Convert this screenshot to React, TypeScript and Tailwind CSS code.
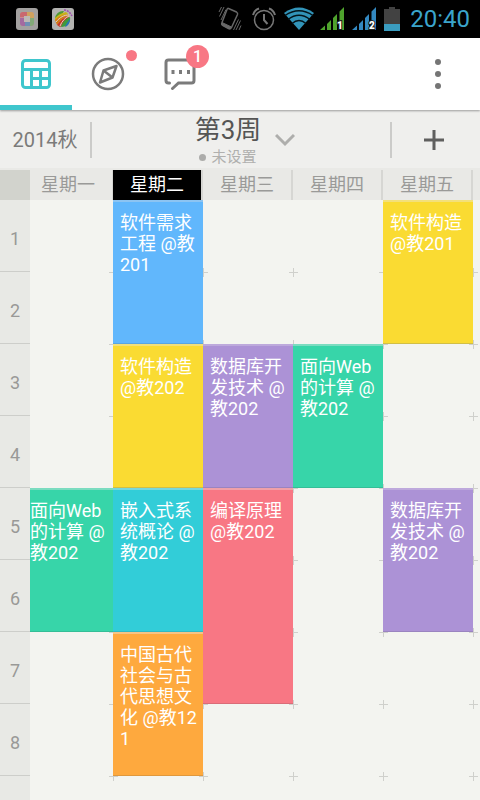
import React from "react";

type Course = {
  name: string;
  day: number;
  start: number;
  span: number;
  tone: string;
};

const DAYS = ["星期一", "星期二", "星期三", "星期四", "星期五"];
const TODAY = 1;

const DAY_COL = ["col-start-2", "col-start-3", "col-start-4", "col-start-5", "col-start-6"];
const ROW_START = [
  "row-start-1",
  "row-start-2",
  "row-start-3",
  "row-start-4",
  "row-start-5",
  "row-start-6",
  "row-start-7",
  "row-start-8",
  "row-start-9",
];
const ROW_SPAN: Record<number, string> = { 2: "row-span-2", 3: "row-span-3" };

const BLUE = "bg-[#61b7fc] border-t-[#8cc4f2] border-b-[#5aa5e0]";
const YELLOW = "bg-[#fadb32] border-t-[#f3e07a] border-b-[#d2bf45]";
const PURPLE = "bg-[#ac92d6] border-t-[#bda9dc] border-b-[#9a84c0]";
const GREEN = "bg-[#37d5a9] border-t-[#7bdcc0] border-b-[#34be97]";
const CYAN = "bg-[#32cdd8] border-t-[#77d7dc] border-b-[#31b8c1]";
const RED = "bg-[#f87784] border-t-[#f0a0a8] border-b-[#da6c78]";
const ORANGE = "bg-[#fea93e] border-t-[#f6c384] border-b-[#df983d]";

const COURSES: Course[] = [
  { name: "面向Web的计算 @教202", day: 0, start: 5, span: 2, tone: GREEN },
  { name: "软件需求工程 @教201", day: 1, start: 1, span: 2, tone: BLUE },
  { name: "软件构造 @教202", day: 1, start: 3, span: 2, tone: YELLOW },
  { name: "嵌入式系统概论 @教202", day: 1, start: 5, span: 2, tone: CYAN },
  { name: "中国古代社会与古代思想文化 @教121", day: 1, start: 7, span: 2, tone: ORANGE },
  { name: "数据库开发技术 @教202", day: 2, start: 3, span: 2, tone: PURPLE },
  { name: "编译原理 @教202", day: 2, start: 5, span: 3, tone: RED },
  { name: "面向Web的计算 @教202", day: 3, start: 3, span: 2, tone: GREEN },
  { name: "软件构造 @教201", day: 4, start: 1, span: 2, tone: YELLOW },
  { name: "数据库开发技术 @教202", day: 4, start: 5, span: 2, tone: PURPLE },
];

const COLUMNS = "grid grid-cols-[30px_83fr_90fr_90fr_90fr_90fr_7fr]";

function PhotoAppIcon() {
  return (
    <svg width="22" height="22" viewBox="0 0 22 22" aria-hidden="true">
      <rect width="22" height="22" rx="3" fill="#a3a1a0" />
      <rect x="4" y="4" width="14" height="14" rx="3" fill="#c98a94" />
      <path d="M7 4h4v5H4V7a3 3 0 0 1 3-3z" fill="#c9686f" />
      <path d="M11 4h4a3 3 0 0 1 3 3v3h-7z" fill="#cfa25f" />
      <path d="M4 10h5v8H7a3 3 0 0 1-3-3z" fill="#a36aa0" />
      <path d="M13 10h5v5a3 3 0 0 1-3 3h-2z" fill="#82a978" />
      <path d="M9 14h5v4H9z" fill="#6f8fb4" />
      <rect x="8" y="8" width="6" height="6" fill="#bdb8b4" />
    </svg>
  );
}

function BallAppIcon() {
  return (
    <svg width="22" height="22" viewBox="0 0 22 22" aria-hidden="true">
      <rect width="22" height="22" rx="3" fill="#b3b3b1" />
      <path d="M3 11a8 8 0 0 1 9-8L9 8z" fill="#4f9a35" />
      <path d="M3 10c3-3 6-5 11-6l2 2C11 7 6 9 3 13z" fill="#c8b419" />
      <path d="M3 12c4-4 8-5 13-6l1 2C12 9 8 12 5 17z" fill="#d57a13" />
      <path d="M5 17c3-5 7-8 12-9 0 4-5 8-9 11z" fill="#c93420" />
      <path d="M9 19c1-4 4-8 9-10 1 5-3 10-9 10z" fill="#3f9b3c" />
      <path d="M13 19c1-3 3-6 5-8 0 4-2 7-5 8z" fill="#2b73b5" />
      <path d="M12 2c3 0 6 2 8 6" fill="none" stroke="#a04bb0" strokeWidth="1.500" strokeDasharray="2 1" />
      <path d="M4 14c4-5 8-7 13-7M8 18c2-5 5-8 9-10" fill="none" stroke="#dcd6c8" strokeWidth="1" />
    </svg>
  );
}

function VibrateIcon() {
  return (
    <svg width="24" height="26" viewBox="0 0 24 26" fill="none" stroke="#686868" aria-hidden="true">
      <path d="M10.500 2.500 18.500 6q1.500 1 1 2.500L13.500 21.500q-1 2-3 1L5 19.500q-2-1-1-3L9 3.500q.5-1.500 1.500-1z" strokeWidth="1.500" />
      <path d="m4 16.500 9.500 4.500-1.500 2-8-4z" fill="#686868" />
      <path d="M6 1 1.500 10.500M3.500 1 1 6M8 3.500 3 14M22.500 14.500 18 24M20.500 13.500 15.500 24M23 19.500 21 24" strokeWidth="1" />
    </svg>
  );
}

function AlarmIcon() {
  return (
    <svg width="24" height="24" viewBox="0 0 24 24" fill="none" stroke="#777777" strokeWidth="1.500" aria-hidden="true">
      <circle cx="12" cy="13" r="9.500" />
      <path d="M12 7v6l3.500 4" strokeWidth="2" />
      <path d="M1 8c1-3.500 3-5.500 6-6.500M23 8c-1-3.500-3-5.500-6-6.500" strokeWidth="2" />
    </svg>
  );
}

function WifiIcon() {
  return (
    <svg width="30" height="24" viewBox="0 0 30 24" aria-hidden="true">
      <path d="M0 6Q15-5 30 6L15 23z" fill="#3294b9" />
      <path d="M1 8.500Q15-1 29 8.500M4 12.500Q15 4 26 12.500M8 16.500Q15 10.500 22 16.500" fill="none" stroke="#03141b" strokeWidth="1.500" />
    </svg>
  );
}

function SignalIcon({ slot, tone }: { slot: string; tone: string }) {
  return (
    <svg width="24" height="24" viewBox="0 0 24 24" role="img" aria-label={"SIM " + slot} className="overflow-visible">
      <path d="M0 23 5 18.500V23zM7 17l4-4v10H7zM13 11l4-4v16h-4zM19.500 4.500 24 0v23h-4.500z" className={tone} />
      <text x="20" y="22" textAnchor="middle" fontSize="10" fontWeight="900" fill="#fff" stroke="#222" strokeWidth="2" paintOrder="stroke">
        {slot}
      </text>
    </svg>
  );
}

function BatteryIcon() {
  return (
    <svg width="16" height="24" viewBox="0 0 16 24" aria-hidden="true">
      <path d="M5 0h6v2h5v22H0V2h5z" fill="#424242" />
      <path d="M0 17h16v7H0z" fill="#3b9dc0" />
    </svg>
  );
}

function StatusBar() {
  return (
    <div className="flex h-[38px] items-center bg-black pl-4 pr-[10px]">
      <div className="flex gap-[14px]">
        <PhotoAppIcon />
        <BallAppIcon />
      </div>
      <div className="ml-auto flex items-center">
        <VibrateIcon />
        <div className="ml-[10px] flex items-center gap-2">
          <AlarmIcon />
          <WifiIcon />
        </div>
        <div className="ml-[6px] flex items-center gap-2">
          <SignalIcon slot="1" tone="fill-[#4fa32d]" />
          <SignalIcon slot="2" tone="fill-[#3388c0]" />
          <BatteryIcon />
        </div>
        <span className="ml-[10px] text-[24px] leading-[38px] text-[#3ba5cc]">20:40</span>
      </div>
    </div>
  );
}

function TimetableIcon() {
  return (
    <svg width="32" height="32" viewBox="0 0 32 32" fill="none" stroke="#3fc6cd" strokeWidth="3" aria-hidden="true">
      <rect x="2.500" y="2.500" width="27" height="27" rx="3" />
      <path d="M2.500 11.500h27M11.500 11.500v18M20.500 11.500v18M11.500 20.500h18" />
    </svg>
  );
}

function CompassIcon() {
  return (
    <svg width="34" height="34" viewBox="0 0 34 34" fill="none" stroke="#7b7b7b" strokeWidth="2.500" strokeLinejoin="round" aria-hidden="true">
      <circle cx="17" cy="17" r="15" strokeWidth="2.500" />
      <path d="M25.500 9 21.500 20.500 9 25.500 12.500 13.500zM12.500 13.500l9 7" />
    </svg>
  );
}

function MessageIcon() {
  return (
    <svg width="32" height="32" viewBox="0 0 32 32" fill="none" stroke="#7b7b7b" strokeWidth="3" strokeLinecap="round" aria-hidden="true">
      <path d="M5.500 25H4.500q-2.500 0-2.500-2.500v-18Q2 2 4.500 2h23Q30 2 30 4.500v18Q30 25 27.500 25H14.500L8.500 30.500" />
      <path d="M9 12v4M16.500 12v4M24.500 12v4" strokeLinecap="butt" />
    </svg>
  );
}

function TabBar() {
  return (
    <nav className="relative z-10 flex h-[72px] bg-white shadow-[0_1px_2px_rgba(0,0,0,0.35)]">
      <button type="button" aria-label="课程表" className="flex w-[72px] items-center justify-center border-b-[5px] border-[#3fc6cd] pt-[5px]">
        <TimetableIcon />
      </button>
      <button type="button" aria-label="发现" className="relative flex w-[72px] items-center justify-center">
        <CompassIcon />
        <span className="absolute left-[54px] top-3 size-[11px] rounded-full bg-[#f87784]" />
      </button>
      <button type="button" aria-label="消息" className="relative flex w-[72px] items-center justify-center">
        <MessageIcon />
        <span className="absolute left-[42px] top-[7px] size-[23px] rounded-full bg-[#f87784] text-center text-[16px] font-medium leading-[23px] text-white">
          1
        </span>
      </button>
      <button type="button" aria-label="更多" className="ml-auto flex w-[84px] flex-col items-center justify-center gap-[6px]">
        <span className="size-[6px] rounded-full bg-[#757575]" />
        <span className="size-[6px] rounded-full bg-[#757575]" />
        <span className="size-[6px] rounded-full bg-[#757575]" />
      </button>
    </nav>
  );
}

function WeekBar() {
  return (
    <div className="flex h-[58px] items-center bg-[#efefed] pt-[2px]">
      <button type="button" className="h-9 w-[92px] border-r-2 border-[#cbcbc9] text-[20px] leading-9 text-[#7b7b7a]">
        2014秋
      </button>
      <button type="button" className="flex flex-1 items-center justify-center gap-[14px] pl-2">
        <span className="flex flex-col items-center pt-1">
          <span className="text-[26px] leading-[30px] text-[#555554]">第3周</span>
          <span className="flex items-center gap-[5px] text-[15px] leading-6 text-[#b0b0ae]">
            <span className="size-[7px] rounded-full bg-[#acacaa]" />
            未设置
          </span>
        </span>
        <svg width="20" height="14" viewBox="0 0 20 14" fill="none" stroke="#aeaeac" strokeWidth="3" aria-hidden="true">
          <path d="m1 2 9 9 9-9" />
        </svg>
      </button>
      <button type="button" aria-label="添加课程" className="flex h-9 w-[90px] items-center justify-center border-l-2 border-[#cbcbc9] pr-1">
        <svg width="22" height="22" viewBox="0 0 22 22" stroke="#5f5f5e" strokeWidth="3" aria-hidden="true">
          <path d="M11 1v20M1 11h20" />
        </svg>
      </button>
    </div>
  );
}

function DayHeader() {
  return (
    <div className={COLUMNS + " h-8 bg-[#e9e9e6] pt-[2px] text-center text-[18px] leading-[30px]"}>
      <div className="bg-[#d2d3cd]" />
      {DAYS.map((day, i) => (
        <div
          key={day}
          className={
            i === TODAY
              ? "border-r-2 border-[#d6d6d3] bg-black text-white"
              : i === 0
                ? "border-r border-[#d6d6d3] pr-[6px] text-[#9a9a98]"
                : "border-r-2 border-[#d6d6d3] text-[#9a9a98]"
          }
        >
          {day}
        </div>
      ))}
    </div>
  );
}

function Timetable() {
  return (
    <main className={COLUMNS + " flex-1 grid-rows-[repeat(8,72px)_minmax(24px,1fr)] overflow-hidden bg-[#f3f4f0]"}>
      {ROW_START.map((row, r) => (
        <React.Fragment key={row}>
          <div
            className={
              row +
              " col-start-1 bg-[#e8e9e5] text-center text-[18px] leading-[78px] text-[#999997]" +
              (r < 8 ? " border-b border-[#cdceca]" : "")
            }
          >
            {r < 8 ? r + 1 : null}
          </div>
          {r < 8 &&
            DAY_COL.map((col) => (
              <div key={col} className={row + " " + col + " relative"}>
                <span className="absolute -bottom-px -right-[5px] h-px w-[9px] bg-[#cfd0cc]" />
                <span className="absolute -bottom-[5px] -right-px h-[9px] w-px bg-[#cfd0cc]" />
              </div>
            ))}
        </React.Fragment>
      ))}
      {COURSES.map((c) => (
        <button
          type="button"
          key={c.day + "-" + c.start}
          className={
            "relative flex items-start border-t-2 border-b pt-[10px] text-left text-[18px] leading-[21px] break-all text-white " +
            (c.day === 0 ? "pl-0 " : "pl-[7px] ") +
            DAY_COL[c.day] +
            " " +
            ROW_START[c.start - 1] +
            " " +
            ROW_SPAN[c.span] +
            " " +
            c.tone
          }
        >
          {c.name}
        </button>
      ))}
    </main>
  );
}

export default function App() {
  return (
    <div lang="zh-CN" className="flex min-h-screen flex-col bg-[#f3f4f0] font-[Roboto,'Noto_Sans_CJK_SC',sans-serif]">
      <StatusBar />
      <TabBar />
      <WeekBar />
      <DayHeader />
      <Timetable />
    </div>
  );
}
